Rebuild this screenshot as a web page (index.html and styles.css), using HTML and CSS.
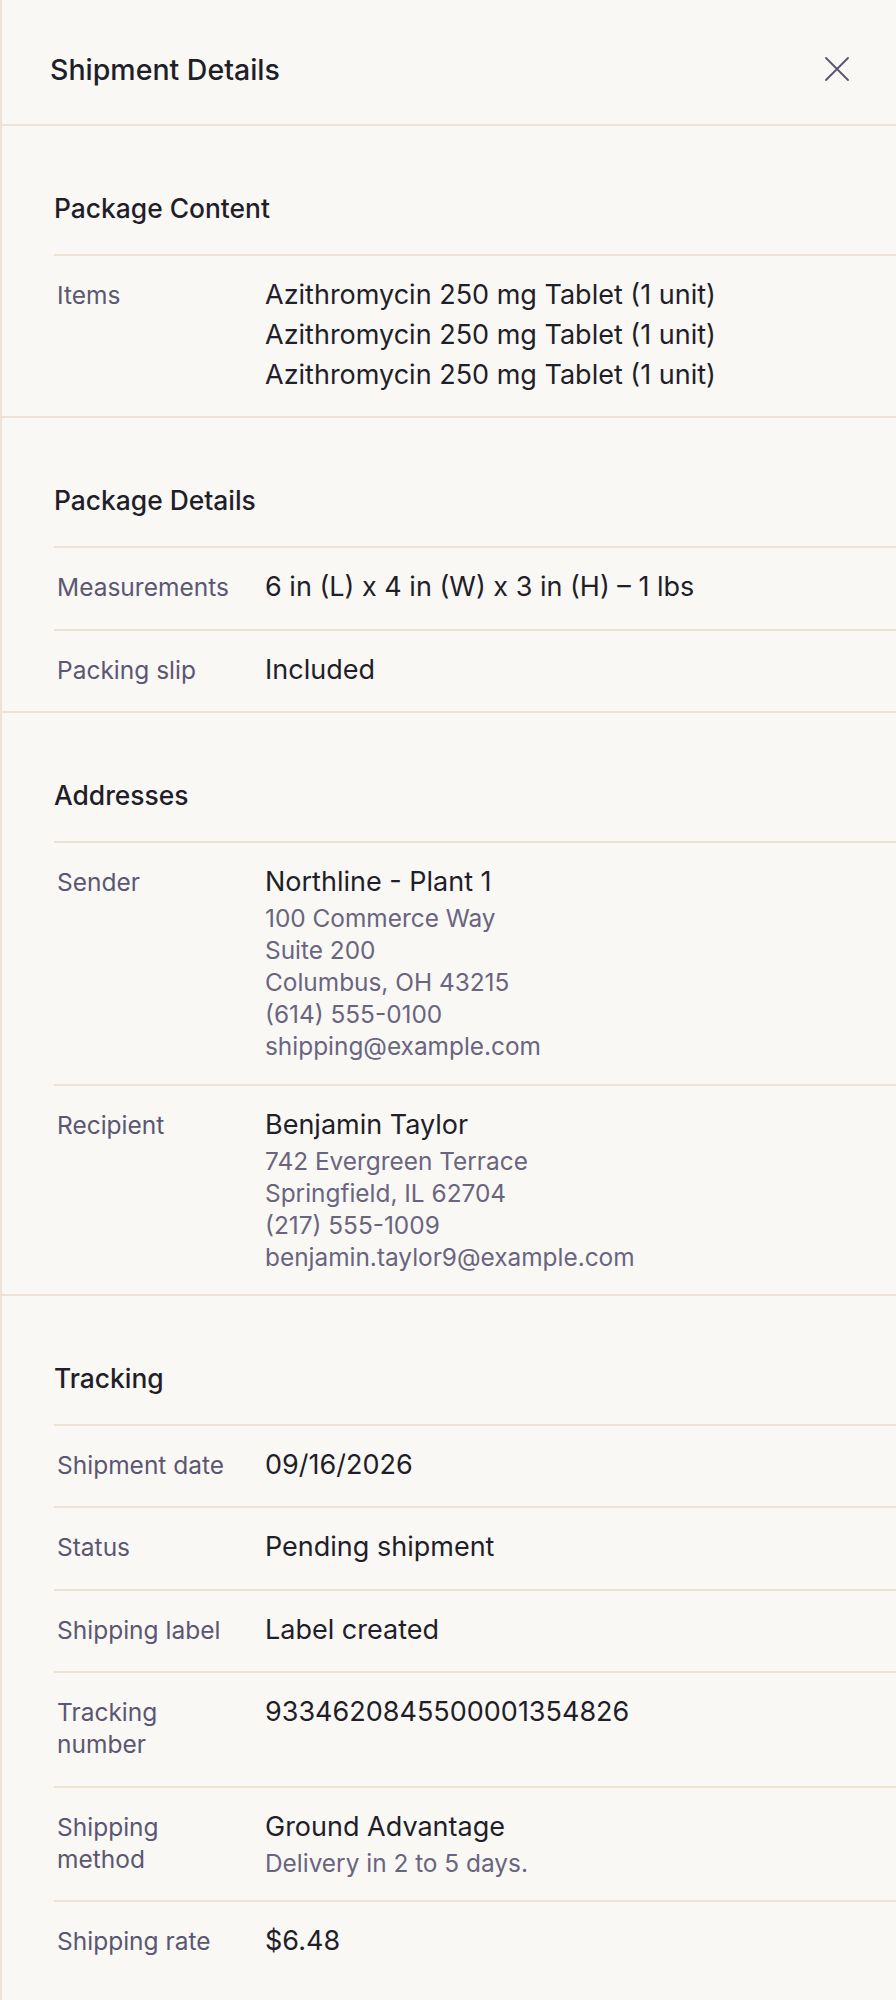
FILE: index.html
```html
<!DOCTYPE html>
<html lang="en">
<head>
<meta charset="utf-8">
<title>Shipment Details</title>
<link rel="stylesheet" href="styles.css">
</head>
<body>
<aside class="panel">
  <header class="panel-header">
    <h1 class="panel-title">Shipment Details</h1>
    <button class="close-btn" aria-label="Close">
      <svg width="24" height="24" viewBox="0 0 24 24" fill="none" stroke="currentColor" stroke-width="1.8" stroke-linecap="round"><path d="M1 1L23 23M23 1L1 23"/></svg>
    </button>
  </header>

  <section class="section">
    <h2 class="section-title">Package Content</h2>
    <dl class="rows">
      <div class="row">
        <dt class="label">Items</dt>
        <dd class="value">
          <div class="item">Azithromycin 250 mg Tablet (1 unit)</div>
          <div class="item">Azithromycin 250 mg Tablet (1 unit)</div>
          <div class="item">Azithromycin 250 mg Tablet (1 unit)</div>
        </dd>
      </div>
    </dl>
  </section>

  <section class="section">
    <h2 class="section-title">Package Details</h2>
    <dl class="rows">
      <div class="row">
        <dt class="label">Measurements</dt>
        <dd class="value">6 in (L) x 4 in (W) x 3 in (H) – 1 lbs</dd>
      </div>
      <div class="row">
        <dt class="label">Packing slip</dt>
        <dd class="value">Included</dd>
      </div>
    </dl>
  </section>

  <section class="section">
    <h2 class="section-title">Addresses</h2>
    <dl class="rows">
      <div class="row">
        <dt class="label">Sender</dt>
        <dd class="value">
          <div class="name">Northline - Plant 1</div>
          <div class="sub">100 Commerce Way</div>
          <div class="sub">Suite 200</div>
          <div class="sub">Columbus, OH 43215</div>
          <div class="sub">(614) 555-0100</div>
          <div class="sub">shipping@example.com</div>
        </dd>
      </div>
      <div class="row">
        <dt class="label">Recipient</dt>
        <dd class="value">
          <div class="name">Benjamin Taylor</div>
          <div class="sub">742 Evergreen Terrace</div>
          <div class="sub">Springfield, IL 62704</div>
          <div class="sub">(217) 555-1009</div>
          <div class="sub">benjamin.taylor9@example.com</div>
        </dd>
      </div>
    </dl>
  </section>

  <section class="section">
    <h2 class="section-title">Tracking</h2>
    <dl class="rows">
      <div class="row">
        <dt class="label">Shipment date</dt>
        <dd class="value">09/16/2026</dd>
      </div>
      <div class="row">
        <dt class="label">Status</dt>
        <dd class="value">Pending shipment</dd>
      </div>
      <div class="row">
        <dt class="label">Shipping label</dt>
        <dd class="value">Label created</dd>
      </div>
      <div class="row">
        <dt class="label">Tracking number</dt>
        <dd class="value">9334620845500001354826</dd>
      </div>
      <div class="row">
        <dt class="label">Shipping method</dt>
        <dd class="value">
          <div class="name">Ground Advantage</div>
          <div class="sub">Delivery in 2 to 5 days.</div>
        </dd>
      </div>
      <div class="row">
        <dt class="label">Shipping rate</dt>
        <dd class="value">$6.48</dd>
      </div>
    </dl>
  </section>
</aside>
</body>
</html>
```

FILE: styles.css
```css
* { box-sizing: border-box; }

html, body {
  margin: 0;
  padding: 0;
  background: #f9f8f5;
}

body {
  font-family: Inter, "Noto Sans", sans-serif;
  color: #1f1e29;
}

.panel {
  border-left: 2px solid #ede3d4;
  min-height: 2000px;
  background: #f9f8f5;
}

.panel-header {
  height: 126px;
  border-bottom: 2px solid #ede3d4;
  display: flex;
  align-items: center;
  justify-content: space-between;
  padding: 16px 47px 0 48px;
}

.panel-title {
  margin: 0;
  font-size: 28.5px;
  font-weight: 500;
  line-height: 36px;
}

.close-btn {
  border: 0;
  background: none;
  padding: 0;
  width: 24px;
  height: 24px;
  margin-top: -3px;
  color: #575370;
  display: flex;
}

.section {
  border-bottom: 2px solid #ede3d4;
  padding: 68px 0 0 52px;
}

.section:last-child {
  border-bottom: 0;
}

.section-title {
  margin: 0 0 32px;
  font-size: 26.4px;
  font-weight: 500;
  line-height: 28px;
}

.rows {
  margin: 0;
}

.row {
  display: grid;
  grid-template-columns: 211px 1fr;
  border-top: 2px solid #ede3d4;
  padding: 19px 0 21.4px;
}

.label {
  margin: 0;
  padding: 4px 28px 4px 3px;
  font-size: 24.5px;
  line-height: 32px;
  color: #5b5773;
}

.value {
  margin: 0;
  font-size: 27px;
  line-height: 40px;
  color: #1f1e29;
}

.sub {
  font-size: 24.4px;
  line-height: 32px;
  color: #69657f;
}
```
